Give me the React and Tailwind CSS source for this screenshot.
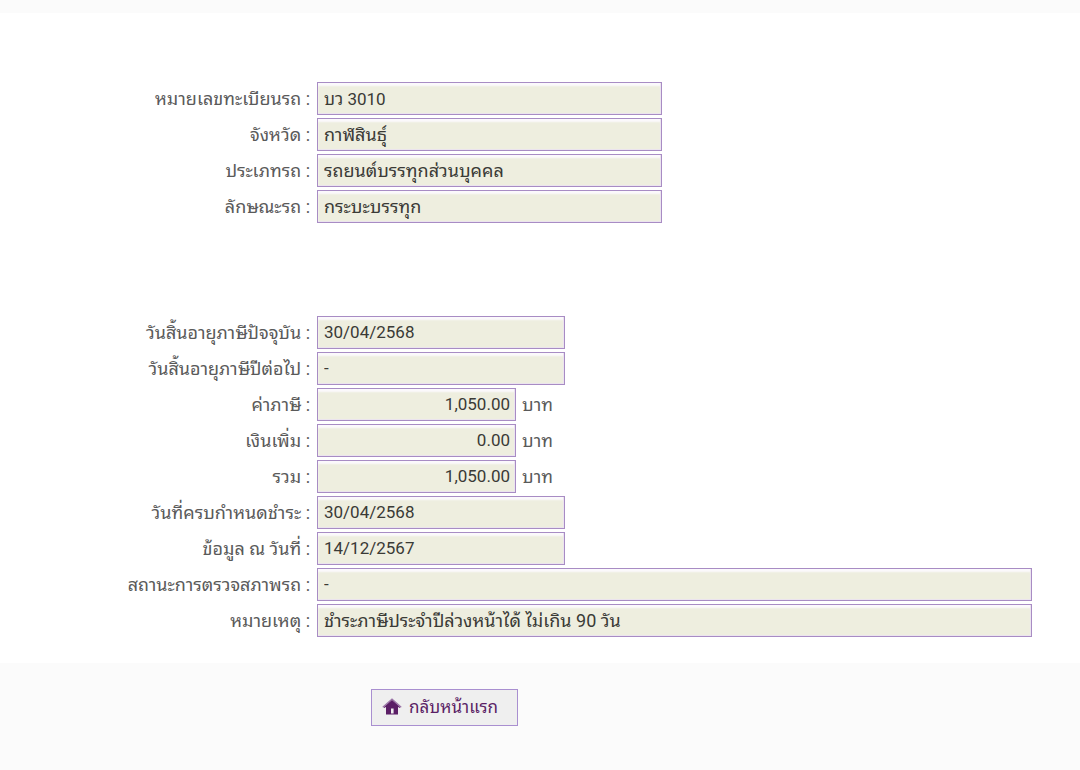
const vehicle = [
  { id: 'plate', label: 'หมายเลขทะเบียนรถ', value: 'บว 3010', size: 'md' },
  { id: 'province', label: 'จังหวัด', value: 'กาฬสินธุ์', size: 'md', thai: true },
  { id: 'type', label: 'ประเภทรถ', value: 'รถยนต์บรรทุกส่วนบุคคล', size: 'md', thai: true },
  { id: 'body', label: 'ลักษณะรถ', value: 'กระบะบรรทุก', size: 'md', thai: true },
]

const tax = [
  { id: 'expiry', label: 'วันสิ้นอายุภาษีปัจจุบัน', value: '30/04/2568', size: 'sm' },
  { id: 'nextExpiry', label: 'วันสิ้นอายุภาษีปีต่อไป', value: '-', size: 'sm' },
  { id: 'fee', label: 'ค่าภาษี', value: '1,050.00', size: 'money', unit: 'บาท' },
  { id: 'surcharge', label: 'เงินเพิ่ม', value: '0.00', size: 'money', unit: 'บาท' },
  { id: 'total', label: 'รวม', value: '1,050.00', size: 'money', unit: 'บาท' },
  { id: 'due', label: 'วันที่ครบกำหนดชำระ', value: '30/04/2568', size: 'sm' },
  { id: 'asOf', label: 'ข้อมูล ณ วันที่', value: '14/12/2567', size: 'sm' },
  { id: 'inspection', label: 'สถานะการตรวจสภาพรถ', value: '-', size: 'full' },
  { id: 'note', label: 'หมายเหตุ', value: 'ชำระภาษีประจำปีล่วงหน้าได้ ไม่เกิน 90 วัน', size: 'full', thai: true },
]

const sizes = {
  md: 'w-[345px]',
  sm: 'w-[248px]',
  money: 'w-[199px] text-right',
  full: 'min-w-0 flex-1',
}

function Field({ id, label, value, size, unit, thai }) {
  return (
    <div className="flex items-center">
      <label htmlFor={id} className="w-[317px] shrink-0 pr-[7px] text-right text-[18px] leading-6 text-[#5a5a5a]">
        {label} :
      </label>
      <input
        id={id}
        readOnly
        defaultValue={value}
        className={`h-[33px] border border-[#a88cc4] bg-[#eeeedf] pr-[5px] pl-[6px] text-[#3a3a36] shadow-[inset_-1px_-1px_0_#ebe4ee,inset_0_3px_2px_#fbf9fc] outline-none ${thai ? 'pb-[4px] text-[18px]' : 'pb-[2px] text-[17px]'} ${sizes[size]}`}
      />
      {unit && <span className="ml-[6px] text-[18px] leading-6 text-[#5a5a5a]">{unit}</span>}
    </div>
  )
}

function HomeIcon() {
  return (
    <svg viewBox="0 0 20 20" className="size-5" aria-hidden="true">
      <path d="M4 9 10 3.6 16 9v8.5H4z" fill="#5b1f66" />
      <path d="M.8 10.2 10 2l9.2 8.2" fill="none" stroke="#9a74a6" strokeWidth="1.3" />
      <path d="M2.2 10.6 10 3.8l7.8 6.8" fill="none" stroke="#5b1f66" strokeWidth="1.2" />
      <path d="M9 11.5h2.6v5H9z" fill="#efefef" />
    </svg>
  )
}

export default function App() {
  return (
    <div className="min-h-screen bg-[#fbfbfb] pt-[13px] font-['Roboto','Noto_Sans_Thai_Looped','Noto_Looped_Thai','Noto_Sans_Thai_UI','Droid_Sans_Thai','Loma','Garuda','Noto_Sans_Thai',sans-serif] text-[17px] leading-6">
      <main className="bg-white pt-[69px] pr-12 pb-[26px]">
        <section className="flex flex-col gap-[3px]">
          {vehicle.map((f) => <Field key={f.id} {...f} />)}
        </section>
        <section className="mt-[93px] flex flex-col gap-[3px]">
          {tax.map((f) => <Field key={f.id} {...f} />)}
        </section>
      </main>
      <footer className="pt-[26px] pl-[371px]">
        <button type="button" className="flex h-[37px] w-[147px] items-center gap-[7px] bg-[#efefef] pb-[2px] pl-[11px] text-[#5b1f66] shadow-[inset_0_0_0_1px_#a98fd0]">
          <HomeIcon />
          กลับหน้าแรก
        </button>
      </footer>
    </div>
  )
}
